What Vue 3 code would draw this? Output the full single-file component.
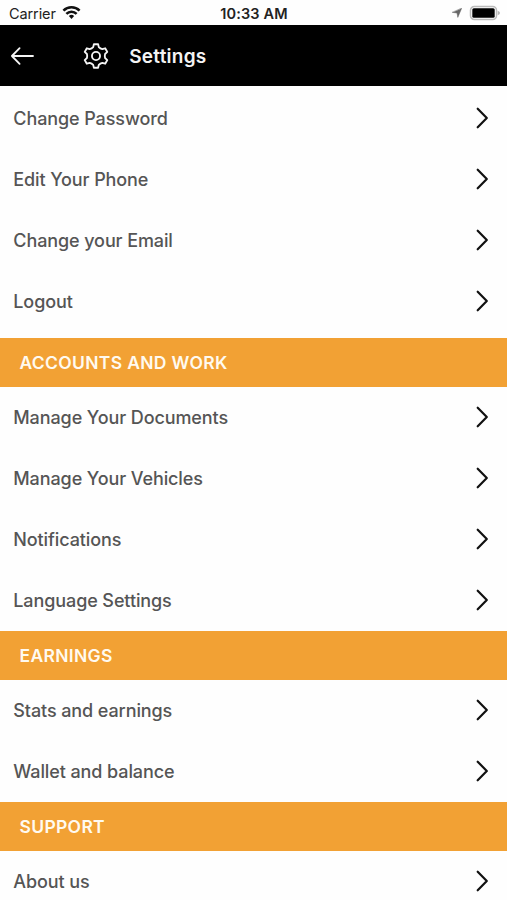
<template>
  <div class="screen">
    <div class="status-bar">
      <div class="status-left">
        <span class="carrier">Carrier</span>
        <svg class="wifi" viewBox="0 0 20 15">
          <path d="M1.5 5.6a12 12 0 0 1 17 0" />
          <path d="M4.6 8.9a7.6 7.6 0 0 1 10.8 0" />
          <path class="wifi-dot" d="M7.2 11.3a4.1 4.1 0 0 1 5.6 0L10 14.3z" />
        </svg>
      </div>
      <span class="time">10:33 AM</span>
      <div class="status-right">
        <svg class="location" viewBox="0 0 10 10">
          <path d="M9.6 0.4L5.8 9.4L5 5L0.5 4.4z" />
        </svg>
        <svg class="battery" viewBox="0 0 32 16">
          <rect class="battery-case" x="1.5" y="1.5" width="26" height="13" rx="3.8" />
          <rect class="battery-level" x="3.3" y="3.3" width="22.4" height="9.4" rx="1.5" />
          <path class="battery-tip" d="M28.7 5.7q2.3 0.8 2.3 2.3t-2.3 2.3z" />
        </svg>
      </div>
    </div>

    <header class="header">
      <button class="back-btn" aria-label="Back">
        <svg viewBox="0 0 24 20">
          <path d="M9.6 2.2L1.9 10l7.7 7.8M1.9 10H23" />
        </svg>
      </button>
      <svg class="gear" viewBox="-0.5 -0.5 29 29">
        <path
          d="M11.8 1.8H16.2L16.9 4.8Q18.4 6.4 20.5 6.9L23.5 6L25.7 9.8L23.4 11.9Q22.8 14 23.4 16.1L25.7 18.2L23.5 22L20.5 21.1Q18.4 21.6 16.9 23.2L16.2 26.2H11.8L11.1 23.2Q9.6 21.6 7.5 21.1L4.5 22L2.3 18.2L4.6 16.1Q5.2 14 4.6 11.9L2.3 9.8L4.5 6L7.5 6.9Q9.6 6.4 11.1 4.8Z"
        />
        <circle cx="14" cy="14" r="4.2" />
      </svg>
      <h1>Settings</h1>
    </header>

    <section v-for="(section, i) in sections" :key="i" class="section">
      <h2 v-if="section.title" class="section-title">{{ section.title }}</h2>
      <ul class="list">
        <li v-for="item in section.items" :key="item" class="row">
          <span>{{ item }}</span>
          <svg class="chevron" viewBox="0 0 14 24">
            <path d="M2.7 2.7L11.8 12L2.7 21.3" />
          </svg>
        </li>
      </ul>
    </section>
  </div>
</template>

<script setup>
const sections = [
  {
    title: '',
    items: ['Change Password', 'Edit Your Phone', 'Change your Email', 'Logout']
  },
  {
    title: 'ACCOUNTS AND WORK',
    items: ['Manage Your Documents', 'Manage Your Vehicles', 'Notifications', 'Language Settings']
  },
  {
    title: 'EARNINGS',
    items: ['Stats and earnings', 'Wallet and balance']
  },
  {
    title: 'SUPPORT',
    items: ['About us']
  }
]
</script>

<style>
body {
  background: #fefefe;
}
</style>

<style scoped>
.screen {
  height: 900px;
  overflow: hidden;
  background: #fefefe;
  font-family: Inter, Roboto, sans-serif;
  color: #555;
}

svg {
  display: block;
  fill: none;
  stroke-linecap: round;
  stroke-linejoin: round;
}

.status-bar {
  display: grid;
  grid-template-columns: 1fr auto 1fr;
  align-items: center;
  height: 25.4px;
  padding: 0 6px 0 9px;
  box-sizing: border-box;
  color: #222;
}

.status-left,
.status-right {
  display: flex;
  align-items: center;
}

.status-left {
  gap: 6px;
}

.status-right {
  justify-content: flex-end;
  gap: 7px;
}

.carrier {
  padding-top: 2px;
  font-size: 14.5px;
  letter-spacing: -0.1px;
}

.wifi {
  width: 19px;
  height: 15px;
  stroke: #111;
  stroke-width: 2.7;
  stroke-linecap: butt;
}

.wifi .wifi-dot {
  fill: #111;
  stroke: none;
}

.time {
  padding-top: 2px;
  margin-right: 2px;
  font-size: 14.5px;
  font-weight: 600;
  letter-spacing: 0.15px;
}

.location {
  width: 10px;
  height: 10px;
  fill: #666;
  stroke: #666;
  stroke-width: 0.5;
}

.battery {
  width: 32px;
  height: 16px;
}

.battery-case {
  stroke: #bbb;
  stroke-width: 1.5;
}

.battery-level {
  fill: #000;
}

.battery-tip {
  fill: #b5b5b5;
}

.header {
  display: flex;
  align-items: center;
  height: 60.9px;
  padding-left: 10px;
  background: #000;
  color: #f4f4f4;
}

.back-btn {
  padding: 0;
  border: none;
  background: none;
  cursor: pointer;
}

.back-btn svg {
  width: 24px;
  height: 20px;
  stroke: #f4f4f4;
  stroke-width: 1.8;
}

.gear {
  width: 28px;
  height: 28px;
  margin-left: 47.7px;
  stroke: #f4f4f4;
  stroke-width: 1.9;
}

.header h1 {
  margin: 0 0 0 19.5px;
  padding-top: 1px;
  font-size: 19px;
  font-weight: 600;
  letter-spacing: 0.25px;
}

.section-title {
  display: flex;
  align-items: center;
  height: 48.9px;
  margin: 0;
  padding-left: 19.5px;
  background: #f2a134;
  color: #fffaf0;
  font-size: 17.5px;
  font-weight: 600;
  letter-spacing: 0.32px;
}

.list {
  margin: 0;
  padding: 0;
  list-style: none;
}

.section:first-of-type .list {
  padding: 0.9px 0 6.1px;
}

.row {
  display: flex;
  align-items: center;
  justify-content: space-between;
  height: 61.1px;
  padding: 0 18px 0 13.3px;
  font-size: 18px;
  font-weight: 500;
  letter-spacing: -0.1px;
}

.row span {
  padding-top: 1px;
}

.chevron {
  width: 14px;
  height: 24px;
  stroke: #111;
  stroke-width: 2.2;
}
</style>
